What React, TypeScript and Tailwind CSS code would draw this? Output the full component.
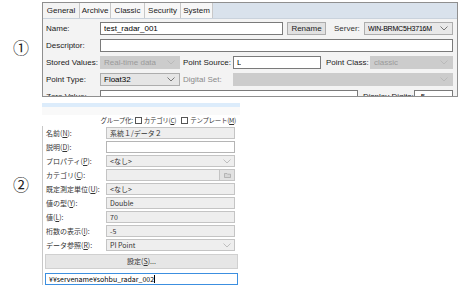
import React from "react";

const Chevron = ({ light = false }: { light?: boolean }) => (
  <svg width="8" height="5" viewBox="0 0 8 5" className="shrink-0">
    <path d="M0.5 0.5 L4 4 L7.5 0.5" fill="none" stroke={light ? "#b8b8b8" : "#6a6a6a"} strokeWidth="0.9" />
  </svg>
);

function Box({ w, value = "", disabled = false, select = false, className = "" }: { w: string; value?: string; disabled?: boolean; select?: boolean; className?: string }) {
  return (
    <div
      className={`${w} h-[13px] shrink-0 flex items-center justify-between pl-[3px] pr-[4px] border ${
        disabled ? "bg-[#cccccc] border-[#cccccc] text-[#9a9a9a]" : select ? "bg-[#e5e5e5] border-[#adadad] text-black" : "bg-white border-[#7a7a7a] text-black"
      } ${className}`}
    >
      <span className="whitespace-nowrap overflow-hidden leading-none">{value}</span>
      {select && <Chevron light={disabled} />}
    </div>
  );
}

const tabs = ["General", "Archive", "Classic", "Security", "System"];
const tabW = ["w-[37px]", "w-[31px]", "w-[34px]", "w-[36px]", "w-[32px]"];

function PiPanel() {
  return (
    <div className="w-[416px] h-[95px] border border-[#8f8f8f] bg-[#f3f3f3] overflow-hidden text-[8px] font-['Liberation_Sans',sans-serif] text-[#1a1a1a]">
      <div className="h-[16px] bg-[#d9e2ec] flex border-b border-[#c9d2dc]">
        {tabs.map((t, i) => (
          <div
            key={t}
            className={`${tabW[i]} h-full flex items-center justify-center border-r border-[#c8c8c8] ${i === 0 ? "bg-[#f3f3f3]" : "bg-[#f7f7f7]"}`}
          >
            {t}
          </div>
        ))}
      </div>
      <div className="flex flex-col gap-[4px] pt-[3px] pl-[2px]">
        <div className="flex items-center">
          <span className="w-[55px] pl-[1px]">Name:</span>
          <Box w="w-[183px]" value="test_radar_001" />
          <div className="ml-[4px] w-[39px] h-[13px] flex items-center justify-center border border-[#adadad] bg-[#e1e1e1]">Rename</div>
          <span className="ml-[8px] w-[30px] text-[#333]">Server:</span>
          <Box w="w-[89px]" value="WIN-BRMC5H3716M" select className="!bg-[#e8e8e8] text-[7px] tracking-[-0.2px]" />
        </div>
        <div className="flex items-center">
          <span className="w-[55px] pl-[1px]">Descriptor:</span>
          <Box w="w-[353px]" />
        </div>
        <div className="flex items-center">
          <span className="w-[55px] pl-[1px]">Stored Values:</span>
          <Box w="w-[80px]" value="Real-time data" disabled select />
          <span className="ml-[3px] w-[50px]">Point Source:</span>
          <Box w="w-[88px]" value="L" />
          <span className="ml-[5px] w-[44px]">Point Class:</span>
          <Box w="w-[83px]" value="classic" disabled select />
        </div>
        <div className="flex items-center">
          <span className="w-[55px] pl-[1px]">Point Type:</span>
          <Box w="w-[80px]" value="Float32" select />
          <span className="ml-[3px] w-[50px] text-[#8a8a8a]">Digital Set:</span>
          <Box w="w-[220px]" disabled select />
        </div>
        <div className="flex items-center">
          <span className="w-[55px] pl-[1px]">Zero Value:</span>
          <Box w="w-[258px]" />
          <span className="ml-[5px] w-[51px] whitespace-nowrap">Display Digits:</span>
          <Box w="w-[39px]" value="-5" />
        </div>
      </div>
    </div>
  );
}

const jp = "font-['Noto_Sans_CJK_JP','Liberation_Sans',sans-serif]";

function Field({ label, k, value = "", white = false, select = false, folder = false }: { label: string; k: string; value?: string; white?: boolean; select?: boolean; folder?: boolean }) {
  return (
    <div className="flex items-center h-[12px]">
      <span className="w-[63px] pl-[3px] whitespace-nowrap leading-none">
        {label}(<u>{k}</u>):
      </span>
      <div
        className={`w-[129px] h-[12px] flex items-center justify-between border ${
          white ? "bg-white border-[#b5b5b5]" : "bg-[#eeeeee] border-[#c4c4c4]"
        } ${folder ? "pl-[3px]" : "px-[3px]"}`}
      >
        <span className="leading-none">{value}</span>
        {select && <Chevron light />}
        {folder && (
          <div className="w-[15px] h-full border-l border-[#c4c4c4] bg-[#e2e2e2] flex items-center justify-center">
            <svg width="7" height="5" viewBox="0 0 7 5">
              <path d="M0.5 0.5 H3 L3.6 1.2 H6.5 V4.5 H0.5 Z" fill="#d6d6d6" stroke="#9a9a9a" strokeWidth="0.6" />
            </svg>
          </div>
        )}
      </div>
    </div>
  );
}

function AfPanel() {
  return (
    <div className={`w-[198px] h-[182px] bg-white text-[7px] text-[#333] ${jp} flex flex-col`}>
      <div className="h-[4px] bg-[#dcecfb]" />
      <div className="h-[9px] bg-[#f9f9f9]" />
      <div className="h-[13px] flex items-center justify-end gap-[2px] pr-[4px] leading-none text-[6.5px] tracking-[-0.3px]">
        <span>グループ化:</span>
        <span className="w-[7px] h-[7px] border border-[#555] bg-white" />
        <span className="mr-[3px]">
          カテゴリ(<u>C</u>)
        </span>
        <span className="w-[7px] h-[7px] border border-[#555] bg-white" />
        <span>
          テンプレート(<u>M</u>)
        </span>
      </div>
      <div className="flex-1 border-l border-[#c8c8c8] flex flex-col gap-[2px] pt-[1px]">
        <Field label="名前" k="N" value="系統１/データ２" />
        <Field label="説明" k="D" white />
        <Field label="プロパティ" k="P" value="<なし>" select />
        <Field label="カテゴリ" k="C" folder />
        <Field label="既定測定単位" k="U" value="<なし>" />
        <Field label="値の型" k="Y" value="Double" />
        <Field label="値" k="L" value="70" />
        <Field label="桁数の表示" k="I" value="-5" />
        <Field label="データ参照" k="R" value="PI Point" select />
        <div className="ml-[2px] mt-[1px] w-[193px] h-[15px] flex items-center justify-center bg-[#e6e6e6] border border-[#d0d0d0]">
          設定(<u>S</u>)...
        </div>
        <div className="ml-[2px] mt-[2px] w-[193px] h-[12px] flex items-center pl-[3px] bg-white border border-[#3c8fe0] text-black">
          ¥¥servename¥sohbu_radar_002<span className="w-px h-[8px] bg-black" />
        </div>
      </div>
    </div>
  );
}

export default function App() {
  return (
    <div className="w-[460px] h-[285px] bg-white overflow-hidden flex flex-col">
      <div className="flex pt-[2px]">
        <div className="w-[42px] flex items-center justify-center pb-[6px]">
          <span className="text-[16px] leading-none text-[#222] font-['Noto_Sans_CJK_JP',sans-serif]">①</span>
        </div>
        <PiPanel />
      </div>
      <div className="flex mt-[6px]">
        <div className="w-[42px] flex items-center justify-center pb-[20px]">
          <span className="text-[16px] leading-none text-[#222] font-['Noto_Sans_CJK_JP',sans-serif]">②</span>
        </div>
        <AfPanel />
      </div>
    </div>
  );
}
